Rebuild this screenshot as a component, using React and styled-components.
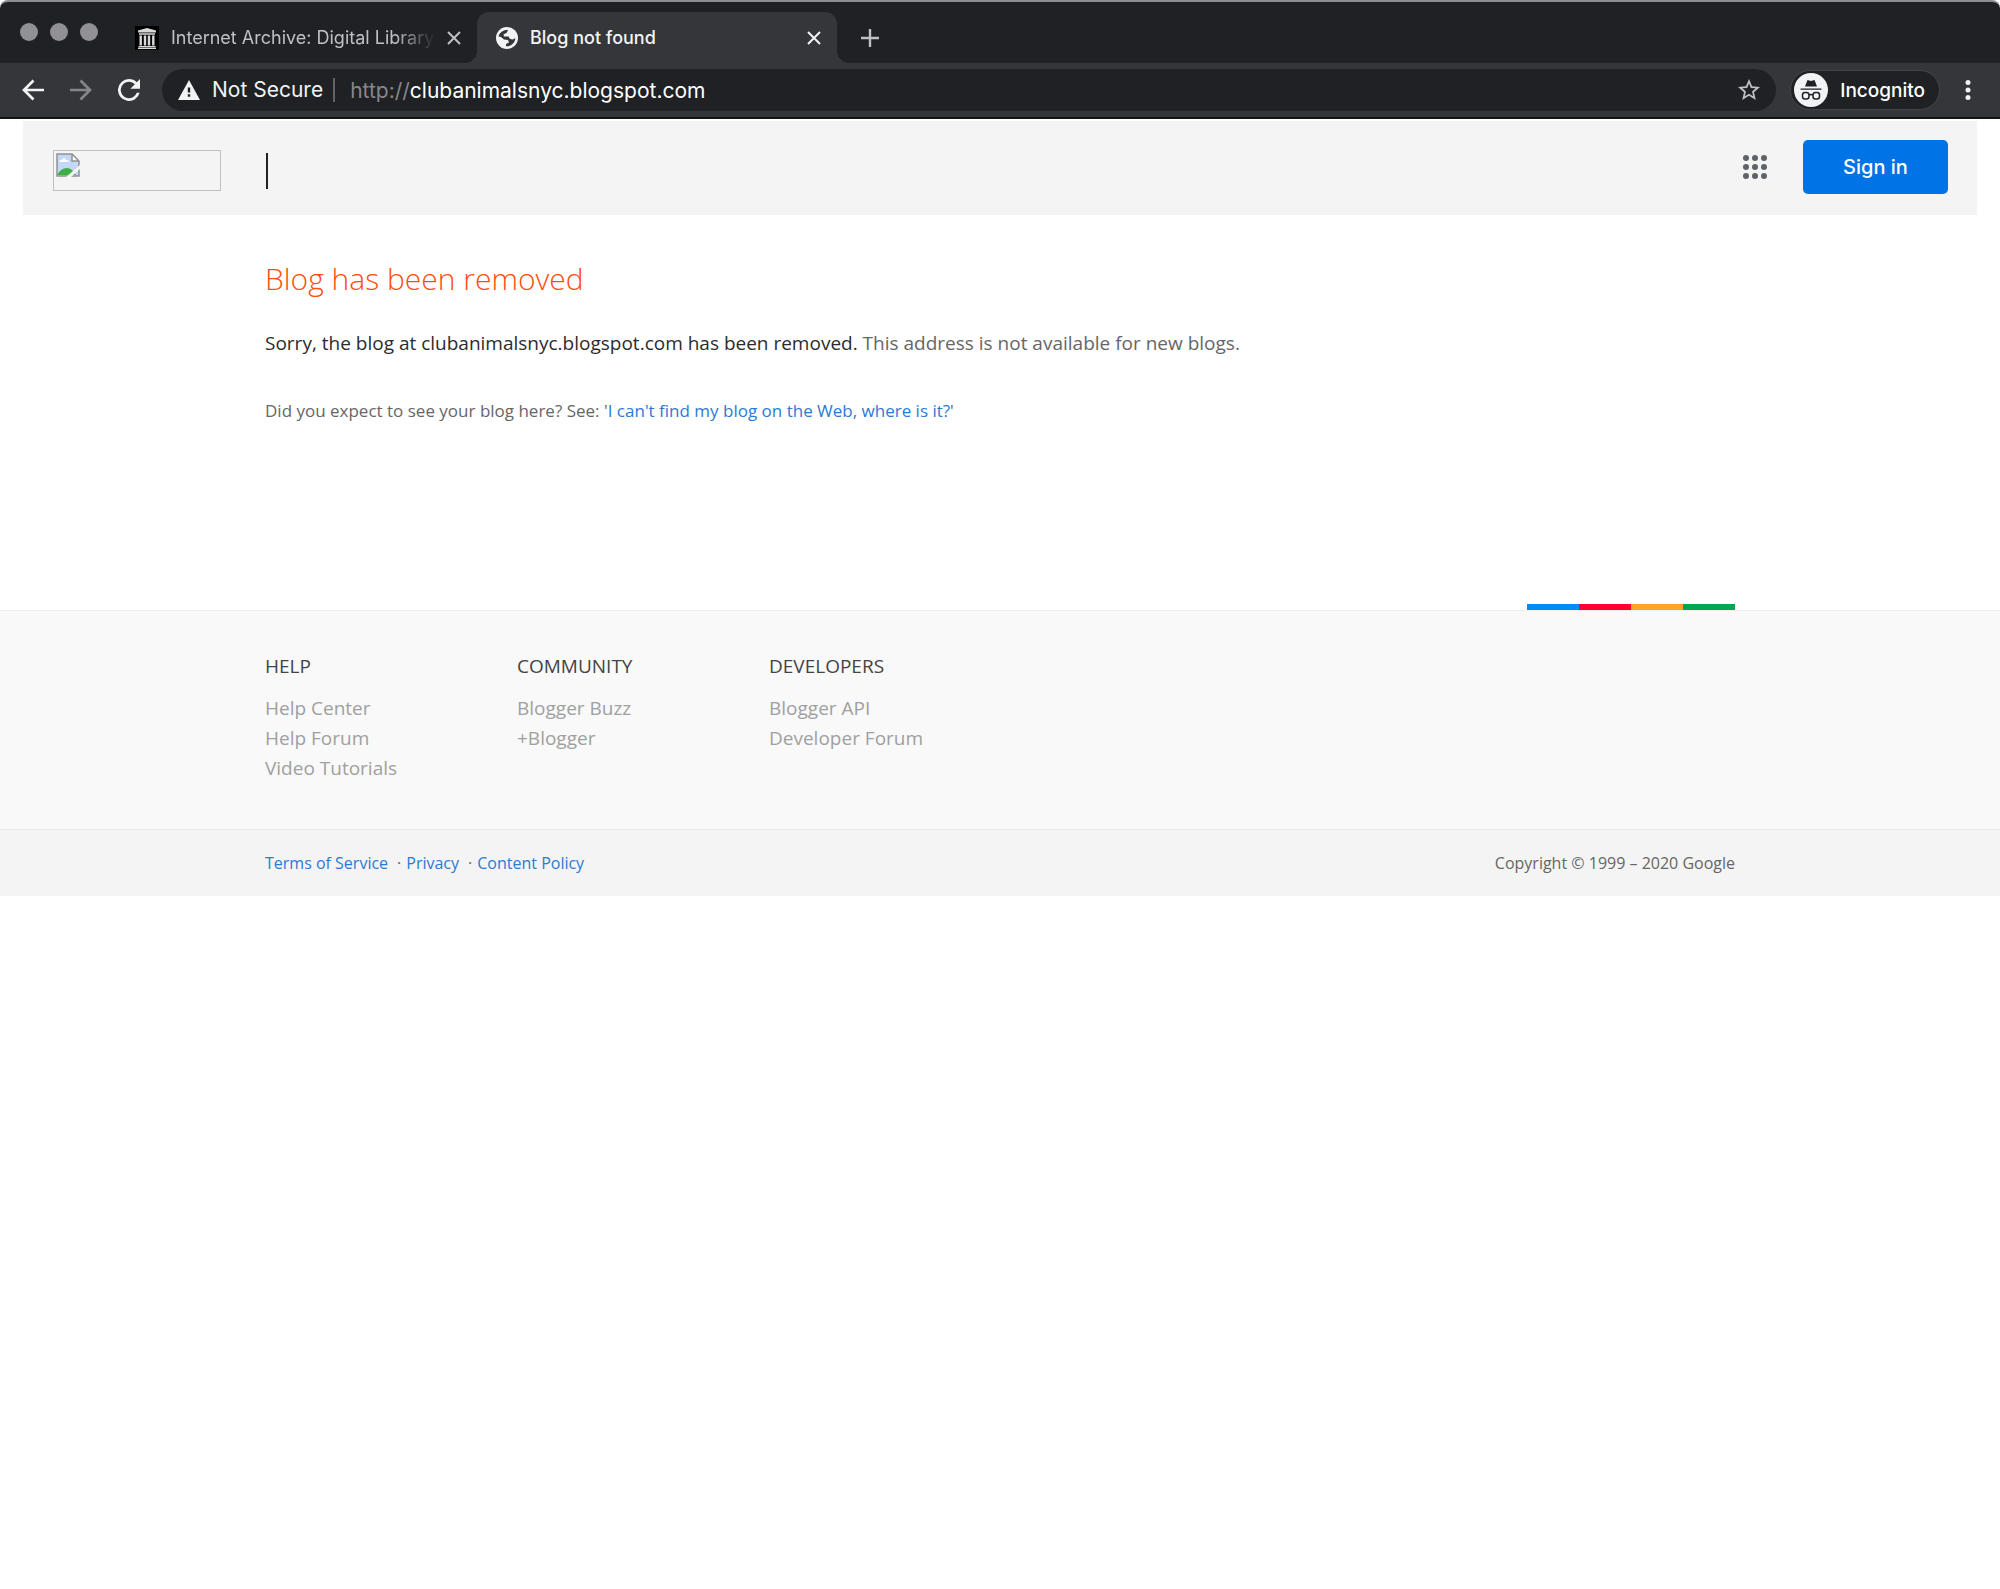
import React from "react";
import styled, { createGlobalStyle } from "styled-components";

const GlobalStyle = createGlobalStyle`
  * {
    box-sizing: border-box;
  }

  body {
    margin: 0;
    background: #fff;
    font-family: "Open Sans", sans-serif;
    font-weight: 400;
    color: #666;
  }

  h1, h2, p, ul {
    margin: 0;
    padding: 0;
  }

  ul {
    list-style: none;
  }

  button {
    border: 0;
    margin: 0;
    padding: 0;
    background: transparent;
    color: inherit;
    font: inherit;
  }

  svg {
    display: block;
    flex-shrink: 0;
  }
`;

const Chrome = styled.header`
  background: #202124;
  border-top: 2px solid #8b8e91;
  border-radius: 8px 8px 0 0;
  font-family: Inter, sans-serif;
  font-weight: 450;
`;

const TabStrip = styled.div`
  display: flex;
  height: 61px;
  padding-top: 10px;
`;

const Lights = styled.div`
  display: flex;
  gap: 12px;
  padding: 11px 37px 0 20px;

  span {
    width: 18px;
    height: 18px;
    border-radius: 50%;
    background: #919095;
  }
`;

const Tab = styled.div`
  position: relative;
  display: flex;
  align-items: center;
  width: ${props => props.$active ? "360px" : "342px"};
  padding: 0 16px 0 ${props => props.$active ? "19px" : "0"};
  border-radius: 12px 12px 0 0;
  background: ${props => props.$active ? "#35363a" : "transparent"};
  color: ${props => props.$active ? "#f1f3f4" : "#bdc1c6"};
  font-weight: ${props => props.$active ? 450 : 400};

  &::before, &::after {
    content: "";
    display: ${props => props.$active ? "block" : "none"};
    position: absolute;
    bottom: 0;
    width: 12px;
    height: 12px;
  }

  &::before {
    right: 100%;
    background: radial-gradient(circle at 0 0, #202124 12px, #35363a 12px);
  }

  &::after {
    left: 100%;
    background: radial-gradient(circle at 100% 0, #202124 12px, #35363a 12px);
  }
`;

const TabTitle = styled.span`
  flex: 1;
  margin: 0 12px;
  font-size: 18px;
  line-height: 24px;
  white-space: nowrap;
  mask-image: ${props => props.$fade ? "linear-gradient(to right, #000 85%, transparent)" : "none"};
`;

const NewTab = styled.button`
  margin-left: 24px;
  color: #bdc1c6;
`;

const Toolbar = styled.div`
  display: flex;
  align-items: center;
  height: 56px;
  padding: 0 29px 0 22px;
  background: #35363a;
  border-bottom: 2px solid #111214;
`;

const NavButton = styled.button`
  margin-right: 26px;
  color: ${props => props.$disabled ? "#85868a" : "#f1f3f4"};
`;

const AddressBar = styled.div`
  display: flex;
  flex: 1;
  align-items: center;
  height: 42px;
  margin-left: -4px;
  padding: 0 16px;
  border-radius: 21px;
  background: #202124;
  color: #f1f3f4;
  font-size: 21px;
  font-weight: 400;
`;

const Security = styled.span`
  margin-left: 12px;
  padding-right: 10px;
  border-right: 2px solid #5f6368;
  line-height: 24px;
`;

const Url = styled.span`
  flex: 1;
  margin-left: 15px;
  color: #fff;

  span {
    color: #85888c;
  }
`;

const Incognito = styled.button`
  display: flex;
  align-items: center;
  gap: 12px;
  height: 40px;
  margin: 0 25px 0 14px;
  padding: 0 14px 0 3px;
  border: 1px solid #44454a;
  border-radius: 20px;
  background: #202124;
  color: #fff;
  font-size: 19px;
`;

const TopBar = styled.div`
  display: flex;
  align-items: center;
  height: 94px;
  margin: 2px 23px 0;
  padding: 0 29px 2px 30px;
  background: #f4f4f4;
`;

const BrokenImage = styled.div`
  width: 168px;
  height: 41px;
  padding: 2px;
  margin-top: 6px;
  border: 1px solid #c0c0c0;
`;

const Divider = styled.span`
  width: 2px;
  height: 36px;
  margin: 8px auto 0 45px;
  background: #222;
`;

const SignIn = styled.button`
  width: 145px;
  height: 54px;
  margin-left: 36px;
  border-radius: 5px;
  background: #0073e6;
  color: #fff;
  font-family: Inter, sans-serif;
  font-size: 20px;
  font-weight: 500;
`;

const Container = styled.div`
  max-width: 1470px;
  margin: 0 auto;
`;

const Message = styled(Container)`
  min-height: 389px;
  padding-top: 40px;

  h1 {
    color: #ff4d0d;
    font-size: 30px;
    font-weight: 300;
    line-height: 48px;
  }
`;

const Lead = styled.p`
  margin-top: 24px;
  font-size: 19px;
  line-height: 32px;

  strong {
    color: #2c2c2c;
    font-weight: 400;
  }
`;

const Hint = styled.p`
  margin-top: 40px;
  font-size: 17px;
  line-height: 24px;
`;

const Link = styled.a`
  color: #2a7bd3;
  text-decoration: none;
`;

const Stripes = styled.div`
  display: flex;
  justify-content: flex-end;
  height: 6px;
`;

const Stripe = styled.span`
  width: 52px;
  background: ${props => props.$color};
`;

const FooterLinks = styled.div`
  min-height: 219px;
  background: #f9f9f9;
  border-top: 1px solid #eee;

  nav {
    display: flex;
    padding-top: 40px;
  }
`;

const Column = styled.div`
  width: 252px;
  font-size: 19px;
  line-height: 30px;

  h2 {
    margin-bottom: 12px;
    color: #444;
    font-size: 19px;
    font-weight: 400;
    line-height: 30px;
  }

  a {
    color: #a0a0a0;
    text-decoration: none;
  }
`;

const Legal = styled.div`
  background: #f4f4f4;
  border-top: 1px solid #e9e9e9;
  font-size: 16px;
  line-height: 24px;

  ${Container} {
    display: flex;
    justify-content: space-between;
    padding: 21px 0;
  }

  ul {
    display: flex;
  }

  li + li::before {
    content: "·";
    margin: 0 5px 0 9px;
  }
`;

const footerColumns = [
  { title: "HELP", links: ["Help Center", "Help Forum", "Video Tutorials"] },
  { title: "COMMUNITY", links: ["Blogger Buzz", "+Blogger"] },
  { title: "DEVELOPERS", links: ["Blogger API", "Developer Forum"] },
];

const stripeColors = ["#008cf5", "#ff0033", "#ffa32b", "#00a651"];

const ArchiveIcon = () => (
  <svg width="24" height="24" viewBox="0 0 24 24">
    <path fill="#000" d="M0 0h24v24H0z" />
    <path fill="#d8d8d8" d="M12 2l9 2.500v2H3v-2zM4 7.300h16v1.500H4zM4.500 9.500h2.400v10H4.500zM8.800 9.500h2.400v10H8.800zM12.800 9.500h2.400v10h-2.400zM17.100 9.500h2.400v10h-2.400zM3.500 20h17v1h-17zM3 21.500h18V23H3z" />
  </svg>
);

const GlobeIcon = () => (
  <svg width="22" height="22" viewBox="0 0 22 22">
    <circle cx="11" cy="11" r="11" fill="#f1f3f4" />
    <path fill="#35363a" d="M2.500 9.500C3.500 5.500 7 3 12 2.800L11 5.500 7.500 7.500l.5 2h4.500L14 12l3 .5 2.300-1.500C19.300 15.500 15.500 19.500 10 19.300V17l3-1.500-1-2.500-4-.5L5 10z" />
  </svg>
);

const CloseIcon = () => (
  <svg width="14" height="14" viewBox="0 0 14 14" fill="none" stroke="currentColor" strokeWidth="2">
    <path d="M1 1l12 12M13 1L1 13" />
  </svg>
);

const PlusIcon = () => (
  <svg width="18" height="18" viewBox="0 0 18 18" fill="none" stroke="currentColor" strokeWidth="2.400">
    <path d="M9 0v18M0 9h18" />
  </svg>
);

const ArrowIcon = ({ forward }) => (
  <svg width="22" height="22" viewBox="0 0 22 22" fill="none" stroke="currentColor" strokeWidth="2.700">
    <path d={forward ? "M0 11h20M10.500 1.500L20 11l-9.500 9.500" : "M22 11H2M11.500 1.500L2 11l9.500 9.500"} />
  </svg>
);

const ReloadIcon = () => (
  <svg width="22" height="22" viewBox="4 4 16 16">
    <path fill="currentColor" d="M17.650 6.350A7.960 7.960 0 0 0 12 4a8 8 0 1 0 7.730 10h-2.080A6 6 0 1 1 12 6c1.660 0 3.140.69 4.220 1.780L13 11h7V4z" />
  </svg>
);

const WarningIcon = () => (
  <svg width="22" height="20" viewBox="0 0 22 20">
    <path fill="#f1f3f4" d="M11 0l11 20H0z" />
    <path fill="#202124" d="M9.800 7.500h2.400v5H9.800zM9.800 14.300h2.400v2.400H9.800z" />
  </svg>
);

const StarIcon = () => (
  <svg width="22" height="22" viewBox="2 2 20 20">
    <path fill="#bdc1c6" d="M22 9.240l-7.190-.62L12 2 9.190 8.630 2 9.240l5.460 4.730L5.820 21 12 17.270 18.180 21l-1.630-7.030zM12 15.400l-3.760 2.270 1-4.280-3.320-2.880 4.380-.38L12 6.100l1.710 4.040 4.380.38-3.320 2.880 1 4.280z" />
  </svg>
);

const IncognitoIcon = () => (
  <svg width="34" height="34" viewBox="0 0 34 34">
    <circle cx="17" cy="17" r="17" fill="#f1f3f4" />
    <path fill="#202124" d="M13.500 7l3.500 1 3.500-1 2.500 6.500H11zM6.500 15.500h21v1.300h-21z" />
    <g fill="none" stroke="#202124" strokeWidth="1.500">
      <rect x="8.500" y="19.500" width="6.500" height="6.500" rx="2.500" />
      <rect x="19" y="19.500" width="6.500" height="6.500" rx="2.500" />
      <path d="M15 22q2-1 4 0" />
    </g>
  </svg>
);

const MenuIcon = () => (
  <svg width="6" height="20" viewBox="0 0 6 20" fill="#f1f3f4">
    <circle cx="3" cy="2.500" r="2.500" />
    <circle cx="3" cy="10" r="2.500" />
    <circle cx="3" cy="17.500" r="2.500" />
  </svg>
);

const AppsIcon = () => (
  <svg width="24" height="24" viewBox="0 0 24 24" fill="#5f6368">
    {[3, 12, 21].map(y => [3, 12, 21].map(x => <circle key={`${x}-${y}`} cx={x} cy={y} r="3" />))}
  </svg>
);

const BrokenIcon = () => (
  <svg width="24" height="24" viewBox="0 0 24 24">
    <path fill="#c3d8f7" d="M1 1h15l7 7v15H1z" />
    <path fill="#fff" d="M3 9q1-3 3-2 2-4 4 0 3 0 3 2zM16 1v7h7z" />
    <path fill="#3cb043" d="M1 22q4-7 10-7 5 0 9 7z" />
    <path fill="none" stroke="#919191" strokeWidth="1.500" d="M1 1h15l7 7v15H1zM16 1v7h7" />
    <path fill="#f4f4f4" d="M24 12v4l-9 8h-5z" />
  </svg>
);

export default class App extends React.Component {

  render() {
    return (
      <>
        <GlobalStyle />
        <Chrome>
          <TabStrip>
            <Lights><span /><span /><span /></Lights>
            <Tab>
              <ArchiveIcon />
              <TabTitle $fade>Internet Archive: Digital Library</TabTitle>
              <button aria-label="Close tab"><CloseIcon /></button>
            </Tab>
            <Tab $active>
              <GlobeIcon />
              <TabTitle>Blog not found</TabTitle>
              <button aria-label="Close tab"><CloseIcon /></button>
            </Tab>
            <NewTab aria-label="New tab"><PlusIcon /></NewTab>
          </TabStrip>
          <Toolbar>
            <NavButton aria-label="Back"><ArrowIcon /></NavButton>
            <NavButton aria-label="Forward" $disabled><ArrowIcon forward /></NavButton>
            <NavButton aria-label="Reload"><ReloadIcon /></NavButton>
            <AddressBar>
              <WarningIcon />
              <Security>Not Secure</Security>
              <Url><span>http://</span>clubanimalsnyc.blogspot.com</Url>
              <button aria-label="Bookmark"><StarIcon /></button>
            </AddressBar>
            <Incognito><IncognitoIcon />Incognito</Incognito>
            <button aria-label="Menu"><MenuIcon /></button>
          </Toolbar>
        </Chrome>

        <TopBar>
          <BrokenImage><BrokenIcon /></BrokenImage>
          <Divider />
          <button aria-label="Google apps"><AppsIcon /></button>
          <SignIn>Sign in</SignIn>
        </TopBar>

        <Message as="main">
          <h1>Blog has been removed</h1>
          <Lead>
            <strong>Sorry, the blog at clubanimalsnyc.blogspot.com has been removed.</strong> This address is not available for new blogs.
          </Lead>
          <Hint>
            Did you expect to see your blog here? See: '<Link href="#">I can't find my blog on the Web, where is it?</Link>'
          </Hint>
        </Message>

        <footer>
          <Container>
            <Stripes>
              {stripeColors.map(color => <Stripe key={color} $color={color} />)}
            </Stripes>
          </Container>
          <FooterLinks>
            <Container as="nav">
              {footerColumns.map(column => (
                <Column key={column.title}>
                  <h2>{column.title}</h2>
                  <ul>
                    {column.links.map(link => <li key={link}><a href="#">{link}</a></li>)}
                  </ul>
                </Column>
              ))}
            </Container>
          </FooterLinks>
          <Legal>
            <Container>
              <ul>
                <li><Link href="#">Terms of Service</Link></li>
                <li><Link href="#">Privacy</Link></li>
                <li><Link href="#">Content Policy</Link></li>
              </ul>
              <p>Copyright © 1999 – 2020 Google</p>
            </Container>
          </Legal>
        </footer>
      </>
    )
  }
}
